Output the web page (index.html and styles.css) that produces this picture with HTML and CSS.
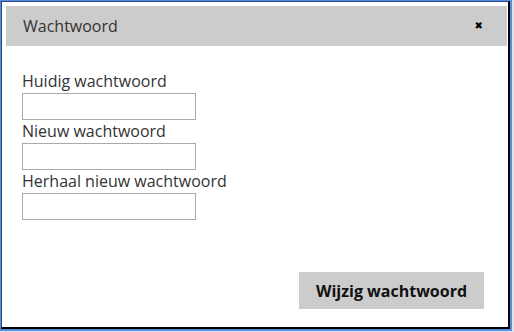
FILE: index.html
```html
<!DOCTYPE html>
<html lang="nl">
<head>
  <meta charset="UTF-8" />
  <title>Wachtwoord</title>
  <link rel="stylesheet" href="styles.css">
</head>
<body>

<div class="dialog">
  <div class="frame">

    <!-- Title bar -->
    <div class="titlebar">
      <span class="title">Wachtwoord</span>
      <span class="close">&#x2716;</span>
    </div>

    <!-- Form -->
    <div class="content">
      <label class="field-label">Huidig wachtwoord</label>
      <input class="field" type="password" />
      <label class="field-label">Nieuw wachtwoord</label>
      <input class="field" type="password" />
      <label class="field-label">Herhaal nieuw wachtwoord</label>
      <input class="field" type="password" />

      <div class="actions">
        <button class="submit">Wijzig wachtwoord</button>
      </div>
    </div>

  </div>
</div>

</body>
</html>
```

FILE: styles.css
```css
body {
  margin: 0;
  background: #dde1e8;
  font-family: 'Open Sans', sans-serif;
  color: #333;
}
.dialog {
  width: 509px;
  height: 328px;
  border-style: solid;
  border-color: #5b8bd9;
  border-width: 1px 2px 2px 1px;
}
.frame {
  height: 100%;
  box-sizing: border-box;
  background: white;
  border-style: solid;
  border-color: #24468c #000 #000 #24468c;
  border-width: 1px 2px 2px 1px;
  padding: 4px 1px 0 4px;
  display: flex;
  flex-direction: column;
}
.titlebar {
  height: 40px;
  background: #cccccc;
  display: flex;
  align-items: center;
  justify-content: space-between;
  padding: 0 24px 0 17px;
}
.title {
  font-size: 16px;
  color: #333;
}
.close {
  font-family: 'DejaVu Sans', sans-serif;
  font-size: 10px;
  color: #000;
  margin-top: -1px;
}
.content {
  flex: 1;
  display: flex;
  flex-direction: column;
  align-items: flex-start;
  padding: 24px 23px 18px 16px;
}
.field-label {
  font-size: 16px;
  line-height: 23px;
  height: 23px;
  color: #333;
}
.field {
  width: 174px;
  height: 27px;
  box-sizing: border-box;
  border: 1px solid #aaa;
  margin: 0;
  padding: 2px 4px;
  font-family: 'Open Sans', sans-serif;
}
.actions {
  margin-top: auto;
  align-self: stretch;
  display: flex;
  justify-content: flex-end;
}
.submit {
  width: 185px;
  height: 37px;
  border: none;
  background: #cccccc;
  font-family: 'Open Sans', sans-serif;
  font-weight: bold;
  font-size: 16px;
  color: #111;
  padding: 0;
}
```
